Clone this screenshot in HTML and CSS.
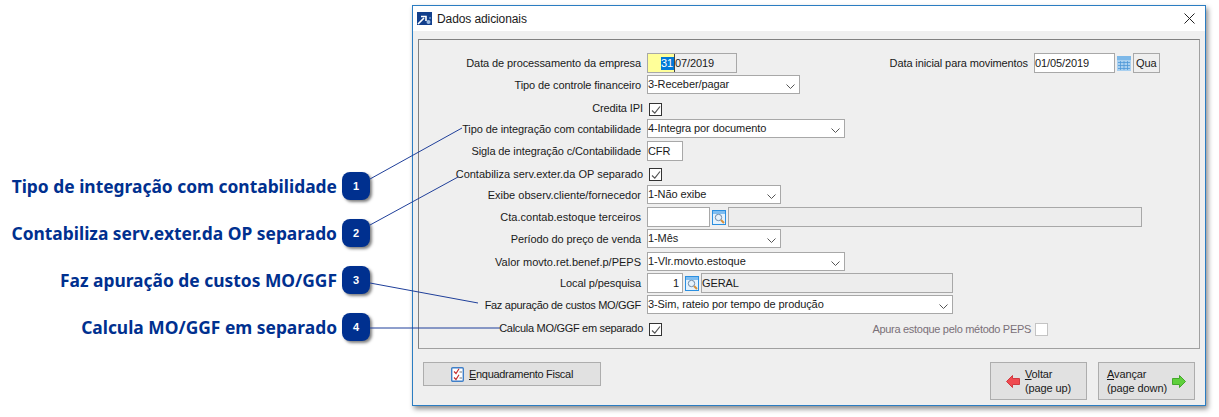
FILE: index.html
```html
<!DOCTYPE html>
<html lang="pt">
<head>
<meta charset="utf-8">
<title>Dados adicionais</title>
<link rel="stylesheet" href="styles.css">
</head>
<body>
<div class="page">
  <ul class="callouts">
    <li class="callout"><span class="callout-text">Tipo de integração com contabilidade</span><span class="badge">1</span></li>
    <li class="callout"><span class="callout-text">Contabiliza serv.exter.da OP separado</span><span class="badge">2</span></li>
    <li class="callout"><span class="callout-text">Faz apuração de custos MO/GGF</span><span class="badge">3</span></li>
    <li class="callout"><span class="callout-text">Calcula MO/GGF em separado</span><span class="badge">4</span></li>
  </ul>

  <section class="window">
    <header class="titlebar">
      <svg class="app-icon" width="15" height="13" viewBox="0 0 15 13"><rect width="15" height="13" fill="#123f8c"/><path d="M1 12 L7 6 M4 4.5 H9 V9" stroke="#fff" stroke-width="1.6" fill="none"/><circle cx="11.5" cy="10" r="2" fill="#9dbde4"/><circle cx="13" cy="6" r="1" fill="#6f9ad0"/></svg>
      <span class="title">Dados adicionais</span>
      <svg class="close" width="11" height="11" viewBox="0 0 11 11"><path d="M.5 .5 L10.5 10.5 M10.5 .5 L.5 10.5" stroke="#222" stroke-width="1" fill="none"/></svg>
    </header>
    <div class="client">
      <div class="group">
        <div class="row r20">
          <label class="lbl">Data de processamento da empresa</label>
          <div class="field w90 date"><span class="day"><span class="sel">31</span></span><span class="rest">07/2019</span></div>
          <label class="lbl-inline">Data inicial para movimentos</label>
          <div class="field w81 white"><span class="val">01/05/2019</span></div>
          <svg class="cal" width="14" height="15" viewBox="0 0 14 15"><rect y="0" width="14" height="15" fill="#a9d0f0"/><rect y="0" width="14" height="4" fill="#7db8e8"/><path d="M1 6.5H13M1 9.5H13M1 12.5H13M3.5 5V14M7 5V14M10.5 5V14" stroke="#4f98d8" stroke-width=".8"/></svg>
          <div class="field qua"><span class="val">Qua</span></div>
        </div>
        <div class="row r19"><label class="lbl">Tipo de controle financeiro</label><div class="field combo w153"><span class="val">3-Receber/pagar</span><svg class="chev" width="9" height="5" viewBox="0 0 9 5"><path d="M.5 .5 L4.5 4.5 L8.5 .5" stroke="#555" fill="none"/></svg></div></div>
        <div class="row r21 end1"><label class="lbl over">Credita IPI</label><span class="check on"><svg width="10" height="10" viewBox="0 0 10 10"><path d="M1 5.5 L3.8 8.2 L9 1.5" stroke="#555" stroke-width="1.2" fill="none"/></svg></span></div>
        <div class="row r20 pad1"><label class="lbl">Tipo de integração com contabilidade</label><div class="field combo w198"><span class="val">4-Integra por documento</span><svg class="chev" width="9" height="5" viewBox="0 0 9 5"><path d="M.5 .5 L4.5 4.5 L8.5 .5" stroke="#555" fill="none"/></svg></div></div>
        <div class="row r20"><label class="lbl">Sigla de integração c/Contabilidade</label><div class="field w36 white"><span class="val">CFR</span></div></div>
        <div class="row r20 end2"><label class="lbl over loose">Contabiliza serv.exter.da OP separado</label><span class="check on"><svg width="10" height="10" viewBox="0 0 10 10"><path d="M1 5.5 L3.8 8.2 L9 1.5" stroke="#555" stroke-width="1.2" fill="none"/></svg></span></div>
        <div class="row r20 pad1"><label class="lbl loose">Exibe observ.cliente/fornecedor</label><div class="field combo w134"><span class="val">1-Não exibe</span><svg class="chev" width="9" height="5" viewBox="0 0 9 5"><path d="M.5 .5 L4.5 4.5 L8.5 .5" stroke="#555" fill="none"/></svg></div></div>
        <div class="row r20"><label class="lbl loose">Cta.contab.estoque terceiros</label><div class="field w63 white"></div><button class="lookup" type="button"><svg width="11" height="11" viewBox="0 0 11 11"><circle cx="4.5" cy="4.5" r="3.2" fill="#e6f2fb" stroke="#6f8aa8"/><path d="M7 7 L10 10" stroke="#d8913a" stroke-width="2"/></svg></button><div class="field w414 disabled"></div></div>
        <div class="row r19"><label class="lbl">Período do preço de venda</label><div class="field combo w134"><span class="val">1-Mês</span><svg class="chev" width="9" height="5" viewBox="0 0 9 5"><path d="M.5 .5 L4.5 4.5 L8.5 .5" stroke="#555" fill="none"/></svg></div></div>
        <div class="row r19 push"><label class="lbl loose">Valor movto.ret.benef.p/PEPS</label><div class="field combo w198"><span class="val loose">1-Vlr.movto.estoque</span><svg class="chev" width="9" height="5" viewBox="0 0 9 5"><path d="M.5 .5 L4.5 4.5 L8.5 .5" stroke="#555" fill="none"/></svg></div></div>
        <div class="row r20"><label class="lbl">Local p/pesquisa</label><div class="field w36 white num"><span class="val">1</span></div><button class="lookup" type="button"><svg width="11" height="11" viewBox="0 0 11 11"><circle cx="4.5" cy="4.5" r="3.2" fill="#e6f2fb" stroke="#6f8aa8"/><path d="M7 7 L10 10" stroke="#d8913a" stroke-width="2"/></svg></button><div class="field w252 disabled"><span class="val">GERAL</span></div></div>
        <div class="row r19"><label class="lbl tight">Faz apuração de custos MO/GGF</label><div class="field combo w306"><span class="val">3-Sim, rateio por tempo de produção</span><svg class="chev" width="9" height="5" viewBox="0 0 9 5"><path d="M.5 .5 L4.5 4.5 L8.5 .5" stroke="#555" fill="none"/></svg></div></div>
        <div class="row r20 end0"><label class="lbl over tight">Calcula MO/GGF em separado</label><span class="check on"><svg width="10" height="10" viewBox="0 0 10 10"><path d="M1 5.5 L3.8 8.2 L9 1.5" stroke="#555" stroke-width="1.2" fill="none"/></svg></span><label class="lbl-muted tight">Apura estoque pelo método PEPS</label><span class="check off"></span></div>
      </div>
      <footer class="actions">
        <button class="btn fiscal" type="button"><svg width="13" height="15" viewBox="0 0 13 15"><rect x=".7" y=".7" width="11.6" height="13.6" rx="1" fill="#fff" stroke="#3f7fc8" stroke-width="1.4"/><path d="M3 4.5 L5 6.5 L8 1.8 M3 10.5 L5 12.5 L8 7.8" stroke="#c43030" stroke-width="1.2" fill="none"/><path d="M8.5 5H11M8.5 11H11" stroke="#777"/></svg><span class="tight"><u>E</u>nquadramento Fiscal</span></button>
        <button class="btn nav back" type="button"><svg width="14" height="13" viewBox="0 0 14 13"><path d="M.5 6.5 L6.5 .5 V3.5 H13.5 V9.5 H6.5 V12.5 Z" fill="#f04a50" stroke="#d03a40"/></svg><span class="nav-text"><u>V</u>oltar<br>(page up)</span></button>
        <button class="btn nav next" type="button"><span class="nav-text"><u>A</u>vançar<br>(page down)</span><svg width="14" height="13" viewBox="0 0 14 13"><path d="M13.5 6.5 L7.5 .5 V3.5 H.5 V9.5 H7.5 V12.5 Z" fill="#5fd03c" stroke="#44a82c"/></svg></button>
      </footer>
    </div>
  </section>

  <svg class="leaders" width="1219" height="417" viewBox="0 0 1219 417">
    <path d="M370 179 L462 128" />
    <path d="M370 225 L458 177" />
    <path d="M370 283 L478 303" />
    <path d="M370 328 L500 328" />
  </svg>
</div>
</body>
</html>
```

FILE: styles.css
```css
* { box-sizing: border-box; }
html, body { margin: 0; padding: 0; background: #fff; }
.page {
  position: relative;
  width: 1219px;
  height: 417px;
  overflow: hidden;
  display: flex;
  align-items: flex-start;
  font-family: "Liberation Sans", sans-serif;
  font-size: 11px;
  letter-spacing: -.1px;
  color: #1a1a1a;
}
.loose { letter-spacing: 0; }
.tight { letter-spacing: -.3px; }

.callouts {
  list-style: none;
  margin: 172px 0 0;
  padding: 0;
  width: 412px;
  flex: none;
  display: flex;
  flex-direction: column;
  gap: 19px;
}
.callout {
  display: flex;
  justify-content: flex-end;
  align-items: center;
  gap: 5px;
  padding-right: 42px;
  height: 28px;
}
.callout-text {
  font-family: "Noto Sans", sans-serif;
  font-size: 17.4px;
  font-weight: 700;
  letter-spacing: 0;
  color: #00308f;
  white-space: nowrap;
}
.badge {
  flex: none;
  width: 28px;
  height: 28px;
  border-radius: 8px;
  background: #00308f;
  color: #fff;
  font-size: 11px;
  font-weight: 700;
  display: flex;
  align-items: center;
  justify-content: center;
  box-shadow: 2px 2px 3px rgba(0,0,0,.5);
}

.window {
  margin-top: 5px;
  width: 794px;
  height: 401px;
  flex: none;
  border: 1px solid #2b7dc2;
  background: #efefef;
  box-shadow: 2px 3px 5px rgba(0,0,0,.45);
  display: flex;
  flex-direction: column;
}
.titlebar {
  height: 25px;
  flex: none;
  background: #fff;
  display: flex;
  align-items: center;
  padding: 0 10px 0 4px;
  gap: 5px;
}
.title { font-size: 12px; flex: 1; }
.close { flex: none; }
.app-icon { flex: none; }

.client { flex: 1; padding: 8px 5px 0 5px; display: flex; flex-direction: column; }
.group {
  height: 310px;
  border: 1px solid #a0a0a0;
  border-top-color: #808080;
  border-left-color: #808080;
  padding-top: 13px;
  display: flex;
  flex-direction: column;
  gap: 2px;
}
.row {
  display: flex;
  align-items: center;
  white-space: nowrap;
}
.r20 { height: 20px; }
.r19 { height: 19px; }
.r21 { height: 21px; }
.pad1 { padding-bottom: 1px; }
.push { margin-top: 2px; }
.end0, .end1, .end2 { align-items: flex-end; }
.end1 { padding-bottom: 1px; }
.end2 { padding-bottom: 2px; }
.lbl {
  flex: none;
  width: 228px;
  padding-right: 6px;
  text-align: right;
}
.lbl.over { padding-right: 0; width: 224px; margin-right: 6px; margin-bottom: 2px; }
.end2 .lbl.over { margin-bottom: 1px; }
.lbl-inline {
  flex: none;
  width: 291px;
  margin-right: 6px;
  text-align: right;
}
.lbl-muted {
  flex: none;
  width: 369px;
  margin-right: 4px;
  margin-bottom: 1px;
  text-align: right;
  color: #7a7078;
}

.field {
  flex: none;
  height: 100%;
  border: 1px solid #a8a8a8;
  background: #fff;
  display: flex;
  align-items: center;
  padding: 0;
  overflow: hidden;
}
.val { line-height: 1; }
.combo { justify-content: space-between; padding-right: 4px; }
.chev { flex: none; margin-top: 3px; }
.w90 { width: 90px; }
.w153 { width: 153px; }
.w198 { width: 198px; }
.w36 { width: 36px; }
.w134 { width: 134px; }
.w63 { width: 63px; }
.w81 { width: 81px; }
.w414 { width: 414px; }
.w252 { width: 252px; }
.w306 { width: 306px; }
.disabled { background: #ededed; margin-left: 2px; }
.num { justify-content: flex-end; padding-right: 3px; }

.date { background: #efefef; align-items: stretch; }
.day {
  width: 26px;
  background: #ffff99;
  display: flex;
  align-items: center;
  justify-content: flex-end;
}
.sel { background: #0078d7; color: #fff; padding: 0 1px 0 0; line-height: 13px; }
.rest { display: flex; align-items: center; border-left: 1px solid #444; padding-left: 0; }

.cal { flex: none; margin-left: 2px; }
.qua { margin-left: 2px; width: 27px; background: #efefef; padding-left: 2px; }

.check {
  flex: none;
  width: 13px;
  height: 13px;
  display: flex;
  align-items: center;
  justify-content: center;
  background: #fff;
}
.check.on { border: 1px solid #333; }
.check.off { border: 1px solid #c4c4c4; }

.lookup {
  flex: none;
  margin: 0 0 0 2px;
  padding: 0;
  width: 14px;
  height: 15px;
  background: linear-gradient(#7fbdf0 0 3px, #e4f2fd 3px);
  border: 1px solid #2b8fe0;
  display: flex;
  align-items: flex-end;
  justify-content: center;
}

.actions {
  display: flex;
  align-items: flex-start;
  padding: 13px 5px 0;
}
.btn {
  font: inherit;
  letter-spacing: inherit;
  color: inherit;
  background: #e1e1e1;
  border: 1px solid #adadad;
  padding: 0;
  display: flex;
  align-items: center;
  justify-content: center;
}
.fiscal { width: 178px; height: 24px; gap: 5px; margin-right: auto; }
.nav { width: 97px; height: 38px; gap: 5px; }
.next { margin-left: 11px; }
.nav-text { text-align: left; line-height: 14px; }

.leaders {
  position: absolute;
  left: 0;
  top: 0;
  pointer-events: none;
}
.leaders path { stroke: #1f3f9a; stroke-width: 1; fill: none; }
```
